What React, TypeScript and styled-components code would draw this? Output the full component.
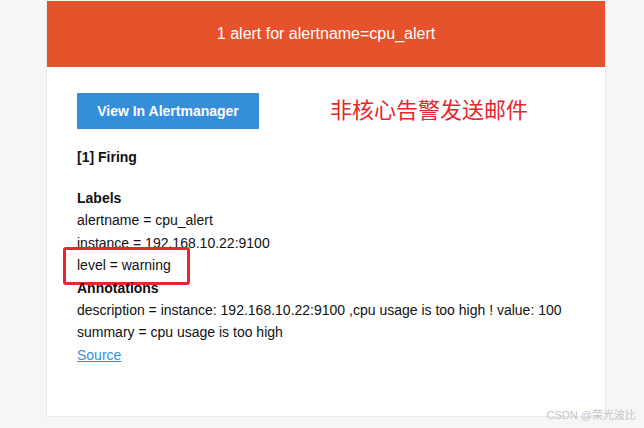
import React from "react";
import styled, { createGlobalStyle } from "styled-components";

const GlobalStyle = createGlobalStyle`
  html, body {
    margin: 0;
    padding: 0;
    background: #f6f6f6;
    height: 100%;
  }
  body {
    font-family: "Liberation Sans", Arial, Helvetica, sans-serif;
    font-size: 14px;
    color: #111;
  }
`;

const Page = styled.div`
  position: relative;
  width: 644px;
  height: 428px;
  overflow: hidden;
  background: #f6f6f6;
`;

const Card = styled.div`
  margin-left: 46px;
  width: 558px;
  background: #fff;
  border: 1px solid #e9e9e9;
  border-top-color: #f6f6f6;
`;

const Header = styled.div`
  height: 66px;
  display: flex;
  align-items: center;
  justify-content: center;
  background: #e6522c;
  color: #fff;
  font-size: 16px;
`;

const Content = styled.div`
  padding: 26px 30px 50px;
`;

const ButtonRow = styled.div`
  display: flex;
  align-items: center;
  gap: 71px;
`;

const Button = styled.a`
  display: inline-block;
  width: 182px;
  padding: 10px 0;
  line-height: 16px;
  background: #348eda;
  color: #fff;
  font-weight: bold;
  font-size: 14px;
  text-align: center;
  text-decoration: none;
`;

const Note = styled.span`
  font-family: "Noto Sans CJK SC", sans-serif;
  font-size: 22px;
  line-height: 1;
  color: #e8252b;
  margin-bottom: 6px;
`;

const Line = styled.div<{ $gap?: number }>`
  position: relative;
  line-height: 22.4px;
  margin-top: ${(p) => p.$gap ?? 0}px;
`;

const Bold = styled.strong`
  font-weight: bold;
`;

const Highlight = styled.span`
  position: absolute;
  left: -14px;
  top: -7px;
  width: 121px;
  height: 32px;
  border: 3px solid #e8262b;
  border-radius: 3px;
`;

const SourceLink = styled.a`
  color: #348eda;
  text-decoration: underline;
`;

const Watermark = styled.div`
  position: absolute;
  right: 8px;
  bottom: 6px;
  font-family: "Liberation Sans", "Noto Sans CJK SC", sans-serif;
  font-size: 11px;
  color: #c4c4c4;
`;

const labels = [
  "alertname = cpu_alert",
  "instance = 192.168.10.22:9100",
];

const annotations = [
  "description = instance: 192.168.10.22:9100 ,cpu usage is too high ! value: 100",
  "summary = cpu usage is too high",
];

export default function App() {
  return (
    <Page>
      <GlobalStyle />
      <Card>
        <Header>1 alert for alertname=cpu_alert</Header>
        <Content>
          <ButtonRow>
            <Button href="#">View In Alertmanager</Button>
            <Note>非核心告警发送邮件</Note>
          </ButtonRow>
          <Line $gap={17}>
            <Bold>[1] Firing</Bold>
          </Line>
          <Line $gap={18.6}>
            <Bold>Labels</Bold>
          </Line>
          {labels.map((l) => (
            <Line key={l}>{l}</Line>
          ))}
          <Line>
            <Highlight />
            level = warning
          </Line>
          <Line>
            <Bold>Annotations</Bold>
          </Line>
          {annotations.map((a) => (
            <Line key={a}>{a}</Line>
          ))}
          <Line>
            <SourceLink href="#">Source</SourceLink>
          </Line>
        </Content>
      </Card>
      <Watermark>CSDN @荣光波比</Watermark>
    </Page>
  );
}
